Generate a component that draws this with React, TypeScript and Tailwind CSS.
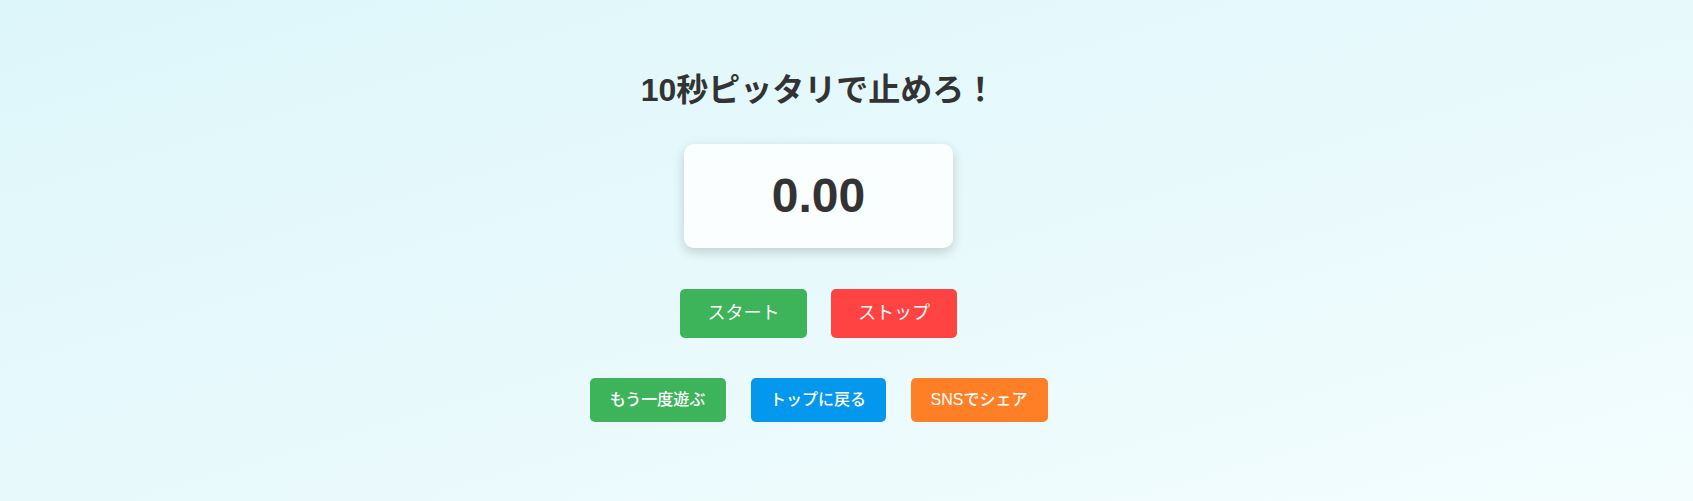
import { useState } from 'react';

const font = { fontFamily: '"Liberation Sans", "Noto Sans CJK JP", sans-serif' };

export default function App() {
  const [time] = useState(0);

  return (
    <div
      style={font}
      className="min-h-[501px] w-full bg-gradient-to-br from-[#ddf6fa] to-[#f3fdfe] text-[#333333]"
    >
      <div className="flex flex-col items-center pr-[56px] pt-[70px] pb-[79px]">
        {/* Title */}
        <h1 className="text-[32px] font-bold leading-[40px]">10秒ピッタリで止めろ！</h1>

        {/* Timer */}
        <div className="mt-[34px] flex h-[104px] w-[269px] items-center justify-center rounded-[10px] bg-white/80 shadow-[0_4px_12px_rgba(0,0,0,0.18)]">
          <span className="text-[48px] font-bold leading-none">{time.toFixed(2)}</span>
        </div>

        {/* Start / Stop */}
        <div className="mt-[41px] flex gap-[24px]">
          <button className="h-[49px] w-[127px] rounded-[5px] bg-[#3db35a] text-[18px] text-white">
            スタート
          </button>
          <button className="h-[49px] w-[126px] rounded-[5px] bg-[#ff4242] text-[18px] text-white">
            ストップ
          </button>
        </div>

        {/* Actions */}
        <div className="mt-[40px] flex gap-[25px]">
          <button className="h-[44px] w-[136px] rounded-[5px] bg-[#3db35a] text-[16px] font-medium text-white">
            もう一度遊ぶ
          </button>
          <button className="h-[44px] w-[135px] rounded-[5px] bg-[#0497ee] text-[16px] font-medium text-white">
            トップに戻る
          </button>
          <button className="h-[44px] w-[137px] rounded-[5px] bg-[#ff7f27] text-[16px] font-medium text-white">
            SNSでシェア
          </button>
        </div>
      </div>
    </div>
  );
}
